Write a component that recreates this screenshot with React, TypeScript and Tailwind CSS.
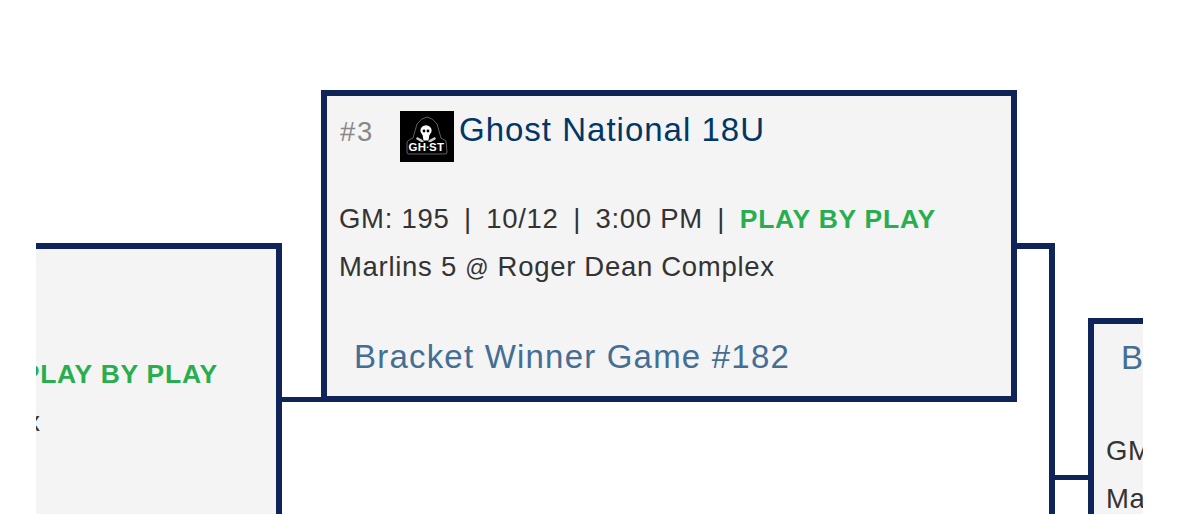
const sans = "font-['Liberation_Sans',Arial,sans-serif]";
const navy = "border-[#0f2459]";

function GhostLogo() {
  return (
    <svg viewBox="0 0 54 51" className="w-[54px] h-[51px] shrink-0 bg-black">
      {/* hood outline */}
      <path d="M9 29 L13 27 L17 13 Q21 7 27 6 Q33 7 37 13 L41 27 L46 30 L47 41 Q47 43 45 43 L9 43 Q7 43 7 41 L7 31 Z" fill="none" stroke="#8a8a8a" strokeWidth="0.7" />
      {/* skull */}
      <ellipse cx="26" cy="19.5" rx="5.6" ry="5.2" fill="#fff" />
      <path d="M22.5 23 H29.5 L28.5 29.5 H23.5 Z" fill="#fff" />
      <path d="M17 26 L22 28.5 L24 31 L21 31 L16 28 Z M35 26 L30 28.5 L28 31 L31 31 L36 28 Z" fill="#cfcfcf" />
      <circle cx="24" cy="20" r="1.4" fill="#000" />
      <circle cx="28" cy="20" r="1.4" fill="#000" />
      <text x="26.5" y="40" textAnchor="middle" fill="#fff" fontSize="11.5" fontWeight="700" letterSpacing="0.4" fontFamily="'Liberation Sans', Arial, sans-serif">
        GH<tspan fontSize="6" dy="-2">•</tspan><tspan dy="2">ST</tspan>
      </text>
    </svg>
  );
}

function GameLine({ gm }: { gm: number }) {
  return (
    <div>
      GM: {gm}
      <span className="mx-[6.2px]"> | </span>
      10/12
      <span className="mx-[6.2px]"> | </span>
      3:00 PM
      <span className="mx-[6.2px]"> | </span>
      <span className="font-bold text-[26.5px] tracking-[0.75px] text-[#28ae4e]">PLAY BY PLAY</span>
    </div>
  );
}

function FieldLine({ field }: { field: number }) {
  return (
    <div>
      Marlins {field} <span className="text-[23px]">@</span> Roger Dean Complex
    </div>
  );
}

export default function App() {
  return (
    <div className={`w-[1179px] h-[514px] overflow-hidden bg-white px-[36px] flex items-start ${sans}`}>
      {/* left game, cut off by the scroll area */}
      <div className={`w-[246px] h-[420px] mt-[243px] shrink-0 overflow-hidden bg-[#f4f4f4] border-t-[6px] border-r-[6px] ${navy}`}>
        <div className="mt-[101px] -ml-[415px] whitespace-nowrap text-[27.5px] leading-[48px] tracking-[0.7px] text-[#333]">
          <GameLine gm={194} />
          <div className="-ml-[16px]">
            <FieldLine field={4} />
          </div>
        </div>
      </div>

      <div className="w-[39px] h-[5px] mt-[397px] shrink-0 bg-[#0f2459]" />

      {/* center game */}
      <div className={`w-[696px] h-[312px] mt-[90px] shrink-0 bg-[#f4f4f4] border-[6px] ${navy} pl-[12px]`}>
        <div className="flex items-start pt-[15px]">
          <span className="w-[61px] pt-[6px] pl-px text-[27.5px] leading-[30px] tracking-[1.6px] text-[#888]">#3</span>
          <GhostLogo />
          <span className="ml-[5px] text-[33px] leading-[38px] tracking-[1px] text-[#003767]">Ghost National 18U</span>
        </div>
        <div className="mt-[33px] whitespace-nowrap text-[27.5px] leading-[48px] tracking-[0.7px] text-[#333]">
          <GameLine gm={195} />
          <FieldLine field={5} />
        </div>
        <div className="mt-[46px] ml-[15px] text-[33px] leading-[38px] tracking-[1.2px] text-[#446e94]">Bracket Winner Game #182</div>
      </div>

      {/* elbow to the next round */}
      <div className={`w-[38px] h-[280px] mt-[243px] shrink-0 border-t-[6px] border-r-[6px] ${navy}`} />

      <div className="w-[33px] h-[5px] mt-[475px] shrink-0 bg-[#0f2459]" />

      {/* right game, cut off */}
      <div className={`flex-1 h-[300px] mt-[318px] overflow-hidden bg-[#f4f4f4] border-t-[6px] border-l-[6px] ${navy} pl-[12px] whitespace-nowrap`}>
        <div className="pl-[15px] pt-[15px] text-[33px] leading-[38px] tracking-[1.2px] text-[#446e94]">Bracket Winner</div>
        <div className="mt-[50px] text-[27.5px] leading-[48px] tracking-[0.7px] text-[#333]">
          <div>GM: 201</div>
          <div>Marlins</div>
        </div>
      </div>
    </div>
  );
}
